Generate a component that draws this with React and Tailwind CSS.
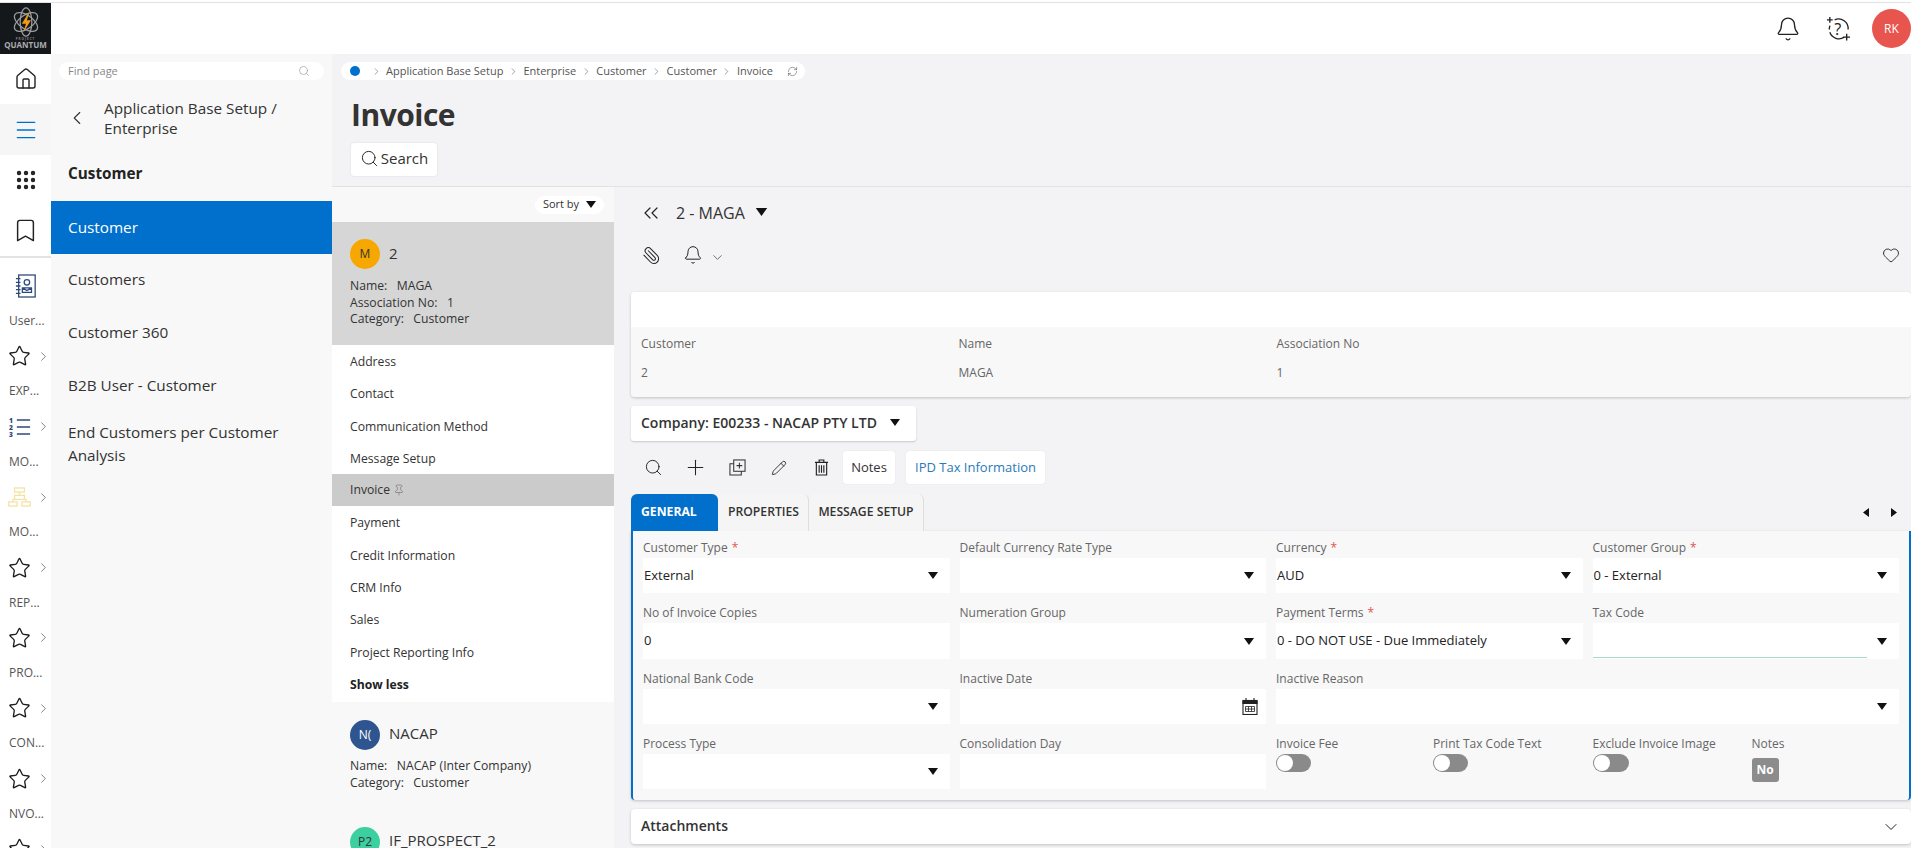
import React from "react";
import {
  Bell,
  Bookmark,
  ChevronDown,
  ChevronLeft,
  ChevronRight,
  ChevronsLeft,
  Grip,
  Heart,
  House,
  Menu,
  Paperclip,
  Pencil,
  Pin,
  Plus,
  RefreshCw,
  Search,
  Star,
} from "lucide-react";

const Caret = ({ className = "" }) => (
  <svg viewBox="0 0 10 7" className={`w-[10px] h-[7px] fill-[#111] ${className}`}>
    <path d="M0 0h10L5 7z" />
  </svg>
);

const QuantumLogo = () => (
  <div className="w-[51px] h-[51px] shrink-0 bg-[#15181a] flex flex-col items-center">
    <svg viewBox="0 0 36 36" className="w-[30px] h-[30px] mt-[4px]" fill="none">
      <g stroke="#9a9ea1" strokeWidth="1.5">
        <ellipse cx="18" cy="18" rx="16" ry="8" transform="rotate(35 18 18)" />
        <ellipse cx="18" cy="18" rx="16" ry="8" transform="rotate(-35 18 18)" />
        <ellipse cx="18" cy="18" rx="7" ry="17" />
      </g>
      <path d="M21 7l-8 13h5l-3 10 9-14h-5l3-9z" fill="#f09a1a" />
    </svg>
    <span className="text-[3px] leading-[4px] text-[#888] tracking-[1px] font-bold">PROJECT</span>
    <span className="text-[8px] leading-[8px] text-[#a9adb0] font-bold">QUANTUM</span>
  </div>
);

const NotebookIcon = () => (
  <svg viewBox="0 0 24 26" className="w-[22px] h-[24px]" fill="none" stroke="#2f4a7a" strokeWidth="1.4">
    <rect x="4" y="1" width="18" height="24" />
    <path d="M1 5h5M1 9h5M1 13h5M1 17h5M1 21h5" />
    <circle cx="13" cy="9" r="3" />
    <path d="M8 20v-5h10v5zM8 15l5 3 5-3" />
  </svg>
);

const NumberedIcon = () => (
  <svg viewBox="0 0 26 24" className="w-[26px] h-[24px]" fill="none">
    <g fill="#2f4a7a" fontSize="7.5" fontWeight="800" fontFamily="Open Sans">
      <text x="1" y="7">1</text>
      <text x="1" y="15">2</text>
      <text x="1" y="23">3</text>
    </g>
    <path d="M10 4h15M10 12h15M10 20h15" stroke="#2f4a7a" strokeWidth="1.6" />
  </svg>
);

const OrgIcon = () => (
  <svg viewBox="0 0 28 24" className="w-[27px] h-[24px]" fill="none" stroke="#f4e3a6" strokeWidth="1.6">
    <rect x="8" y="1" width="12" height="5" />
    <rect x="8" y="10" width="12" height="5" />
    <rect x="1" y="18" width="10" height="5" />
    <rect x="17" y="18" width="10" height="5" />
    <path d="M14 6v4M6 18v-3h2M22 18v-3h-2" />
  </svg>
);

const HelpIcon = () => (
  <svg viewBox="0 0 26 26" className="w-[25px] h-[25px]" fill="none" stroke="#222" strokeWidth="1.4">
    <path d="M9 4a10 10 0 0 1 14 10M19 22a10 10 0 0 1-15-5M3.5 14a10 10 0 0 1 .6-4" />
    <path d="M1 4h6M4 1v6M18 22h7M21.5 18.5v7" />
    <text x="8.5" y="20" fontSize="17" fill="#222" stroke="none" fontFamily="Open Sans">?</text>
  </svg>
);

const TrashIcon = () => (
  <svg viewBox="0 0 16 18" className="w-[15px] h-[17px]" fill="none" stroke="#222" strokeWidth="1.2">
    <path d="M1 3.5h14M5.5 3.5V1h5v2.5M2.5 3.5V17h11V3.5M5.500 6.500v8M8 6.500v8M10.500 6.500v8" />
  </svg>
);

const DuplicateIcon = () => (
  <svg viewBox="0 0 18 18" className="w-[17px] h-[17px]" fill="none" stroke="#333" strokeWidth="1.1">
    <rect x="5" y="1" width="12" height="12" />
    <path d="M5 5H1v12h12v-4M11 4v6M8 7h6" />
  </svg>
);

const CalendarIcon = () => (
  <svg viewBox="0 0 16 17" className="w-[16px] h-[17px] -mr-[4px]" fill="none" stroke="#222" strokeWidth="1.1">
    <rect x="1" y="2.5" width="14" height="14" />
    <path d="M4 0v3M12 0v3" />
    <path d="M1 3h14v2.5H1z" fill="#222" />
    <path d="M3.5 8.5h9v5h-9zM3.5 11h9M6.5 8.5v5M9.5 8.5v5" strokeWidth="0.8" />
  </svg>
);

const railItems = [
  { label: "User...", icon: <NotebookIcon /> },
  { label: "EXP...", star: true },
  { label: "MO...", icon: <NumberedIcon /> },
  { label: "MO...", icon: <OrgIcon /> },
  { label: "REP...", star: true },
  { label: "PRO...", star: true },
  { label: "CON...", star: true },
  { label: "NVO...", star: true },
  { label: "", star: true },
];

const LeftRail = () => (
  <div className="w-[51px] shrink-0 bg-white overflow-hidden">
    <div className="h-[50px] flex items-center justify-center">
      <House size={24} strokeWidth={1.4} className="text-[#222]" />
    </div>
    <div className="h-[51px] flex items-center justify-center bg-[#f6f6f6]">
      <Menu size={26} strokeWidth={1.3} className="text-[#0070cc]" />
    </div>
    <div className="h-[50px] flex items-center justify-center">
      <Grip size={24} strokeWidth={2.4} className="text-[#222]" />
    </div>
    <div className="h-[51px] flex items-center justify-center">
      <Bookmark size={27} strokeWidth={1.3} className="text-[#222]" />
    </div>
    <div className="h-[2px] bg-[#e3e3e3]" />
    {railItems.map((item, i) => (
      <div key={i} className="h-[70.4px] pt-[14px]">
        <div className={`h-[28px] flex items-center ${i === 0 ? "justify-center" : "pl-[8px] gap-[6px]"}`}>
          {item.star ? <Star size={28} strokeWidth={1.4} className="text-[#1c1c1c]" /> : item.icon}
          {i !== 0 && <ChevronRight size={15} strokeWidth={1.3} className="text-[#666] shrink-0 -ml-[1px]" />}
        </div>
        <div className="mt-[13px] pl-[9px] h-[16px] text-[12px] leading-[16px] text-[#555]">{item.label}</div>
      </div>
    ))}
  </div>
);

const navItems = ["Customers", "Customer 360", "B2B User - Customer"];

const NavPanel = () => (
  <div className="w-[281px] shrink-0 bg-[#f8f8f8]">
    <div className="mt-[8px] mx-[8px] w-[265px] h-[18px] bg-white rounded-full flex items-center justify-between pl-[9px] pr-[14px]">
      <span className="text-[11px] text-[#888] pt-[1px]">Find page</span>
      <Search size={12} strokeWidth={1.3} className="text-[#999]" />
    </div>
    <div className="h-[80px] flex items-center pl-[15px] pr-[20px]">
      <ChevronLeft size={22} strokeWidth={1.2} className="text-[#333] shrink-0 mt-[-4px]" />
      <div className="ml-[16px] text-[15.3px] leading-[20px] text-[#333] -mt-[5px]">
        Application Base Setup /<br />Enterprise
      </div>
    </div>
    <div className="h-[41px] pl-[17px] text-[15.3px] font-bold leading-[26px] text-[#222]">Customer</div>
    <div className="h-[53px] bg-[#0070cc] text-white text-[15.3px] flex items-center pl-[17px]">Customer</div>
    {navItems.map((name) => (
      <div key={name} className="h-[53px] pb-[2px] text-[15.3px] text-[#333] flex items-center pl-[17px]">
        {name}
      </div>
    ))}
    <div className="pl-[17px] pr-[40px] pt-[8px] text-[15.3px] leading-[23px] text-[#333]">
      End Customers per Customer Analysis
    </div>
  </div>
);

const crumbs = ["Application Base Setup", "Enterprise", "Customer", "Customer", "Invoice"];

const subItems = [
  "Address",
  "Contact",
  "Communication Method",
  "Message Setup",
  "Invoice",
  "Payment",
  "Credit Information",
  "CRM Info",
  "Sales",
  "Project Reporting Info",
];

const Avatar = ({ bg, color = "text-white", children }) => (
  <div className={`w-[30px] h-[30px] rounded-full flex items-center justify-center text-[12px] ${bg} ${color}`}>
    {children}
  </div>
);

const RecordList = () => (
  <div className="w-[282px] shrink-0 overflow-hidden">
    <div className="h-[35px] bg-[#f8f8f8] flex items-center justify-end pr-[10px]">
      <div className="w-[69px] h-[18px] bg-white rounded-full flex items-center justify-center gap-[7px] text-[11px] text-[#333]">
        Sort by <Caret className="w-[8px] h-[5px]" />
      </div>
    </div>
    <div className="h-[123px] bg-[#d6d6d6] pl-[18px] pt-[17px]">
      <div className="flex items-center gap-[9px]">
        <Avatar bg="bg-[#f7a800]" color="text-[#333]">M</Avatar>
        <span className="text-[15px] text-[#333] -mt-[2px]">2</span>
      </div>
      <div className="mt-[9px] text-[12.2px] leading-[16.5px] text-[#333]">
        <div>Name:&nbsp;&nbsp; MAGA</div>
        <div>Association No:&nbsp;&nbsp; 1</div>
        <div>Category:&nbsp;&nbsp; Customer</div>
      </div>
    </div>
    <div className="bg-white">
      {subItems.map((name) => (
        <div
          key={name}
          className={`h-[32.3px] pl-[18px] flex items-center text-[12.2px] text-[#333] ${
            name === "Invoice" ? "bg-[#cbcbcb]" : "pt-[2px]"
          }`}
        >
          {name}
          {name === "Invoice" && <Pin size={12} strokeWidth={1.1} className="ml-[3px] text-[#666]" />}
        </div>
      ))}
      <div className="h-[34px] pl-[18px] flex items-center text-[12.2px] font-bold text-[#222]">Show less</div>
    </div>
    <div className="bg-[#f8f8f8] h-[107px] pl-[18px] pt-[18px]">
      <div className="flex items-center gap-[9px]">
        <Avatar bg="bg-[#2f5590]">N(</Avatar>
        <span className="text-[15px] text-[#333] -mt-[3px]">NACAP</span>
      </div>
      <div className="mt-[7px] text-[12.2px] leading-[17px] text-[#333]">
        <div>Name:&nbsp;&nbsp; NACAP (Inter Company)</div>
        <div>Category:&nbsp;&nbsp; Customer</div>
      </div>
    </div>
    <div className="bg-[#f8f8f8] pl-[18px] pt-[18px] h-[60px]">
      <div className="flex items-center gap-[9px]">
        <Avatar bg="bg-[#3ccfa0]" color="text-[#333]">P2</Avatar>
        <span className="text-[15px] text-[#333] -mt-[3px]">IF_PROSPECT_2</span>
      </div>
    </div>
  </div>
);

const Label = ({ children, required }) => (
  <div className="h-[20px] text-[12px] leading-[20px] text-[#666] whitespace-nowrap">
    {children}
    {required && <span className="text-[#e5554f] ml-[4px]">*</span>}
  </div>
);

const Field = ({ label, required, value, caret, tall, span, underline, calendar }) => (
  <div className={span ? "col-span-2" : ""}>
    <Label required={required}>{label}</Label>
    <div className={`relative bg-white flex items-center justify-between pl-[1px] pr-[12px] ${tall ? "h-[36px]" : "h-[35px]"}`}>
      <span className="text-[13px] text-[#222]">{value}</span>
      {caret && <Caret />}
      {calendar && <CalendarIcon />}
      {underline && <div className="absolute left-0 right-[32px] bottom-[1px] h-[1px] bg-[#a8dcc8]" />}
    </div>
  </div>
);

const Toggle = ({ wide }) => (
  <div className={`h-[18px] rounded-full bg-[#8a8a8a] flex items-center ${wide ? "w-[36px]" : "w-[35px]"}`}>
    <div className="w-[16px] h-[16px] ml-[1px] rounded-full bg-white" />
  </div>
);

const GeneralForm = () => (
  <div className="bg-[#f8f8f8] border-l-[2px] border-r-[2px] border-[#0070cc] rounded-b-[4px] shadow-[0_1px_3px_rgba(0,0,0,0.2)] pl-[10px] pr-[10px] pt-[7px] pb-[11px] grid grid-cols-4 gap-x-[10px] gap-y-[10px]">
    <Field label="Customer Type" required value="External" caret />
    <Field label="Default Currency Rate Type" caret />
    <Field label="Currency" required value="AUD" caret />
    <Field label="Customer Group" required value="0 - External" caret />
    <Field label="No of Invoice Copies" value="0" tall />
    <Field label="Numeration Group" caret tall />
    <Field label="Payment Terms" required value="0 - DO NOT USE - Due Immediately" caret tall />
    <Field label="Tax Code" caret tall underline />
    <Field label="National Bank Code" caret />
    <Field label="Inactive Date" calendar />
    <Field label="Inactive Reason" caret span />
    <Field label="Process Type" caret />
    <Field label="Consolidation Day" />
    <div className="grid grid-cols-[157px_1fr]">
      <div>
        <Label>Invoice Fee</Label>
        <Toggle />
      </div>
      <div>
        <Label>Print Tax Code Text</Label>
        <Toggle />
      </div>
    </div>
    <div className="grid grid-cols-[159px_1fr]">
      <div>
        <Label>Exclude Invoice Image</Label>
        <Toggle wide />
      </div>
      <div>
        <Label>Notes</Label>
        <div className="mt-[4px] w-[27px] h-[24px] rounded-[3px] bg-[#8c8c8c] text-white text-[12px] font-bold flex items-center justify-center">
          No
        </div>
      </div>
    </div>
  </div>
);

const Detail = () => (
  <div className="flex-1 min-w-0 pl-[17px] overflow-hidden">
    <div className="h-[51px] flex items-center pl-[8px] pt-[1px]">
      <ChevronsLeft size={24} strokeWidth={1.2} className="text-[#222]" />
      <span className="ml-[13px] text-[16px] font-medium text-[#333]">2 - MAGA</span>
      <Caret className="ml-[10px] w-[13px] h-[8px] -mt-[2px]" />
    </div>
    <div className="h-[54px] flex items-start justify-between pl-[11px] pr-[11px] pt-[7px]">
      <div className="flex items-center">
        <Paperclip size={19} strokeWidth={1.3} className="text-[#222] -scale-x-100" />
        <Bell size={20} strokeWidth={1.2} className="ml-[22px] text-[#222]" />
        <ChevronDown size={15} strokeWidth={1.2} className="ml-[7px] mt-[4px] text-[#444]" />
      </div>
      <Heart size={18} strokeWidth={1.2} className="text-[#222] mt-[1px]" />
    </div>
    <div className="rounded-[4px] shadow-[0_1px_3px_rgba(0,0,0,0.2)] overflow-hidden">
      <div className="h-[35px] bg-white" />
      <div className="h-[70px] bg-[#f8f8f8] grid grid-cols-[317.5px_318px_1fr] pl-[10px] pt-[7px] text-[12px]">
        <div>
          <div className="h-[20px] leading-[20px] text-[#666]">Customer</div>
          <div className="mt-[9px] h-[20px] leading-[20px] text-[#666]">2</div>
        </div>
        <div>
          <div className="h-[20px] leading-[20px] text-[#666]">Name</div>
          <div className="mt-[9px] h-[20px] leading-[20px] text-[#666]">MAGA</div>
        </div>
        <div>
          <div className="h-[20px] leading-[20px] text-[#666]">Association No</div>
          <div className="mt-[9px] h-[20px] leading-[20px] text-[#666]">1</div>
        </div>
      </div>
    </div>
    <div className="mt-[9px] w-[285px] h-[35px] bg-white rounded-[3px] shadow-[0_1px_2px_rgba(0,0,0,0.18)] flex items-center justify-between pl-[10px] pr-[15px]">
      <span className="text-[14px] font-semibold text-[#333] -mt-[2px]">Company: E00233 - NACAP PTY LTD</span>
      <Caret className="w-[12px] h-[7px] -mt-[3px]" />
    </div>
    <div className="mt-[10px] h-[33px] flex items-center pl-[1px]">
      <div className="w-[42px] flex justify-center">
        <Search size={19} strokeWidth={1.2} className="text-[#222]" />
      </div>
      <div className="w-[42px] flex justify-center">
        <Plus size={25} strokeWidth={1} className="text-[#222]" />
      </div>
      <div className="w-[42px] flex justify-center">
        <DuplicateIcon />
      </div>
      <div className="w-[42px] flex justify-center">
        <Pencil size={16} strokeWidth={1.3} className="text-[#222]" />
      </div>
      <div className="w-[42px] flex justify-center">
        <TrashIcon />
      </div>
      <div className="ml-[1px] w-[52px] h-[33px] bg-white rounded-[3px] flex items-center justify-center text-[13px] text-[#333] shadow-[0_0_1px_rgba(0,0,0,0.15)]">
        Notes
      </div>
      <div className="ml-[11px] w-[139px] h-[33px] bg-white rounded-[3px] flex items-center justify-center text-[13px] text-[#2a7ab8] shadow-[0_0_1px_rgba(0,0,0,0.15)]">
        IPD Tax Information
      </div>
    </div>
    <div className="mt-[10px] h-[37px] flex items-stretch">
      <div className="w-[87px] bg-[#0070cc] rounded-t-[6px] text-white text-[12.2px] font-bold flex items-center pl-[10px]">
        GENERAL
      </div>
      <div className="ml-[1px] w-[90px] bg-[#f5f5f5] rounded-t-[6px] border-r border-[#ddd] text-[12.2px] font-semibold text-[#333] flex items-center justify-center">
        PROPERTIES
      </div>
      <div className="w-[115px] bg-[#f5f5f5] rounded-t-[6px] border-r border-[#ddd] text-[12.2px] font-semibold text-[#333] flex items-center justify-center">
        MESSAGE SETUP
      </div>
      <div className="flex-1 flex items-center justify-end gap-[22px] pr-[14px]">
        <svg viewBox="0 0 6 9" className="w-[6px] h-[9px] fill-[#111]">
          <path d="M6 0v9L0 4.5z" />
        </svg>
        <svg viewBox="0 0 6 9" className="w-[6px] h-[9px] fill-[#111]">
          <path d="M0 0v9l6-4.5z" />
        </svg>
      </div>
    </div>
    <GeneralForm />
    <div className="mt-[9px] h-[35px] bg-white rounded-[4px] shadow-[0_1px_3px_rgba(0,0,0,0.2)] flex items-center justify-between pl-[10px] pr-[10px]">
      <span className="text-[14px] font-semibold text-[#333] -mt-[2px]">Attachments</span>
      <ChevronDown size={20} strokeWidth={1.2} className="text-[#222]" />
    </div>
  </div>
);

const App = () => {
  return (
    <div className="w-full h-screen overflow-hidden bg-[#f3f2f5] font-['Open_Sans',sans-serif] flex flex-col">
      <div className="h-[54px] shrink-0 bg-white pt-[2px]">
        <div className="h-[52px] border-t border-[#e2e2e2] flex items-center justify-between">
          <QuantumLogo />
          <div className="flex items-center">
            <Bell size={26} strokeWidth={1.2} className="text-[#222]" />
            <div className="ml-[25px]">
              <HelpIcon />
            </div>
            <div className="ml-[21px] w-[39px] h-[39px] rounded-full bg-[#e8554e] text-white text-[12px] flex items-center justify-center">
              RK
            </div>
          </div>
        </div>
      </div>
      <div className="flex-1 min-h-0 flex">
        <LeftRail />
        <NavPanel />
        <div className="flex-1 min-w-0 flex flex-col">
          <div className="h-[133px] shrink-0 pl-[9px] pt-[8px] border-b border-[#e2e2e2]">
            <div className="w-[464px] h-[18px] bg-white rounded-full flex items-center pl-[9px] text-[11px] text-[#555]">
              <span className="w-[10px] h-[10px] rounded-full bg-[#0070cc] mr-[6px]" />
              {crumbs.map((c, i) => (
                <React.Fragment key={i}>
                  <ChevronRight size={11} strokeWidth={1.2} className="mx-[4.5px] text-[#555]" />
                  <span>{c}</span>
                </React.Fragment>
              ))}
              <RefreshCw size={11} strokeWidth={1.2} className="ml-[14px] text-[#555]" />
            </div>
            <div className="pl-[10px] mt-[13px] text-[30px] leading-[44px] font-bold text-[#333] tracking-[-0.5px]">
              Invoice
            </div>
            <div className="ml-[10px] mt-[6px] w-[86px] h-[33px] pb-[2px] bg-white rounded-[3px] shadow-[0_0_2px_rgba(0,0,0,0.12)] flex items-center justify-center gap-[2px] text-[15px] text-[#333]">
              <Search size={19} strokeWidth={1.2} className="text-[#222]" /> Search
            </div>
          </div>
          <div className="flex-1 min-h-0 flex">
            <RecordList />
            <Detail />
          </div>
        </div>
      </div>
    </div>
  );
};

export default App;
